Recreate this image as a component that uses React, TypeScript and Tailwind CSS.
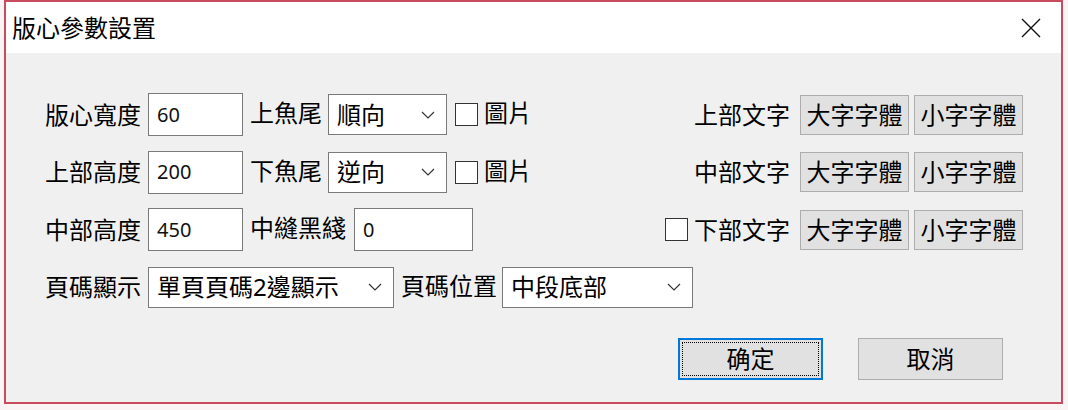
import type { ReactNode } from "react";

const font = { fontFamily: '"Noto Sans", "Noto Sans CJK TC", sans-serif' };

function Label({ children, w }: { children: ReactNode; w?: string }) {
  return <span className={`text-[24px] leading-none text-black whitespace-nowrap ${w ?? ""}`}>{children}</span>;
}

function TextBox({ value, w }: { value: string; w: string }) {
  return (
    <div className={`h-[43px] ${w} border border-[#7a7a7a] bg-white flex items-center pl-[8px] text-[20px] text-[#111]`}>
      {value}
    </div>
  );
}

function Chevron() {
  return (
    <svg width="14" height="8" viewBox="0 0 14 8" className="shrink-0">
      <path d="M1 1 L7 7 L13 1" fill="none" stroke="#333" strokeWidth="1.2" />
    </svg>
  );
}

function Select({ value, w }: { value: string; w: string }) {
  return (
    <div className={`h-[41px] ${w} border border-[#7a7a7a] bg-white flex items-center justify-between pl-[8px] pr-[11px] text-[24px] leading-none text-black`}>
      <span className="whitespace-nowrap">{value}</span>
      <Chevron />
    </div>
  );
}

function Check() {
  return <div className="w-[23px] h-[23px] border-[1.5px] border-[#333] bg-white shrink-0" />;
}

function FontButton({ children }: { children: ReactNode }) {
  return (
    <div className="h-[40px] w-[109px] border border-[#adadad] bg-[#e1e1e1] flex items-center justify-center text-[24px] leading-none text-black">
      {children}
    </div>
  );
}

function RightGroup({ label, check }: { label: string; check?: boolean }) {
  return (
    <div className="flex items-center">
      {check && <div className="mr-[6px]"><Check /></div>}
      <Label>{label}</Label>
      <div className="ml-[10px] flex gap-[5px]">
        <FontButton>大字字體</FontButton>
        <FontButton>小字字體</FontButton>
      </div>
    </div>
  );
}

export default function App() {
  return (
    <div className="w-[1068px] h-[410px] bg-[#faf4f5] overflow-hidden" style={font}>
      <div className="ml-[4px] w-[1059px] h-[404px] border-2 border-[#c94c5e] bg-[#f0f0f0] flex flex-col">
        <div className="h-[51px] bg-white flex items-center justify-between pl-[6px] pr-[19px]">
          <span className="text-[24px] leading-none text-black">版心參數設置</span>
          <svg width="22" height="20" viewBox="0 0 22 20">
            <path d="M2 1 L20 19 M20 1 L2 19" stroke="#111" strokeWidth="1.4" fill="none" />
          </svg>
        </div>

        <div className="flex-1 flex flex-col pl-[39px] pr-[38px] pt-[40px]">
          <div className="flex flex-col gap-[14.5px]">
            <div className="h-[43px] flex items-center justify-between">
              <div className="flex items-center">
                <Label w="w-[97px]">版心寬度</Label>
                <div className="ml-[6px]"><TextBox value="60" w="w-[95px]" /></div>
                <div className="ml-[7px]"><Label>上魚尾</Label></div>
                <div className="ml-[6px]"><Select value="順向" w="w-[119px]" /></div>
                <div className="ml-[8px]"><Check /></div>
                <div className="ml-[6px]"><Label>圖片</Label></div>
              </div>
              <RightGroup label="上部文字" />
            </div>

            <div className="h-[43px] flex items-center justify-between">
              <div className="flex items-center">
                <Label w="w-[97px]">上部高度</Label>
                <div className="ml-[6px]"><TextBox value="200" w="w-[95px]" /></div>
                <div className="ml-[7px]"><Label>下魚尾</Label></div>
                <div className="ml-[6px]"><Select value="逆向" w="w-[119px]" /></div>
                <div className="ml-[8px]"><Check /></div>
                <div className="ml-[6px]"><Label>圖片</Label></div>
              </div>
              <RightGroup label="中部文字" />
            </div>

            <div className="h-[43px] flex items-center justify-between">
              <div className="flex items-center">
                <Label w="w-[97px]">中部高度</Label>
                <div className="ml-[6px]"><TextBox value="450" w="w-[95px]" /></div>
                <div className="ml-[7px]"><Label>中縫黑綫</Label></div>
                <div className="ml-[8px]"><TextBox value="0" w="w-[119px]" /></div>
              </div>
              <RightGroup label="下部文字" check />
            </div>

            <div className="h-[43px] flex items-center">
              <Label w="w-[97px]">頁碼顯示</Label>
              <div className="ml-[6px]"><Select value="單頁頁碼2邊顯示" w="w-[246px]" /></div>
              <div className="ml-[7px]"><Label>頁碼位置</Label></div>
              <div className="ml-[5px]"><Select value="中段底部" w="w-[191px]" /></div>
            </div>
          </div>

          <div className="mt-[29px] flex justify-end gap-[35px] pr-[20px]">
            <div className="h-[42px] w-[145px] border-2 border-[#0078d7] bg-[#e1e1e1] p-[2px]">
              <div className="h-full w-full border border-dotted border-black flex items-center justify-center text-[24px] leading-none text-black">
                确定
              </div>
            </div>
            <div className="h-[42px] w-[145px] border border-[#adadad] bg-[#e1e1e1] flex items-center justify-center text-[24px] leading-none text-black">
              取消
            </div>
          </div>
        </div>
      </div>
    </div>
  );
}
